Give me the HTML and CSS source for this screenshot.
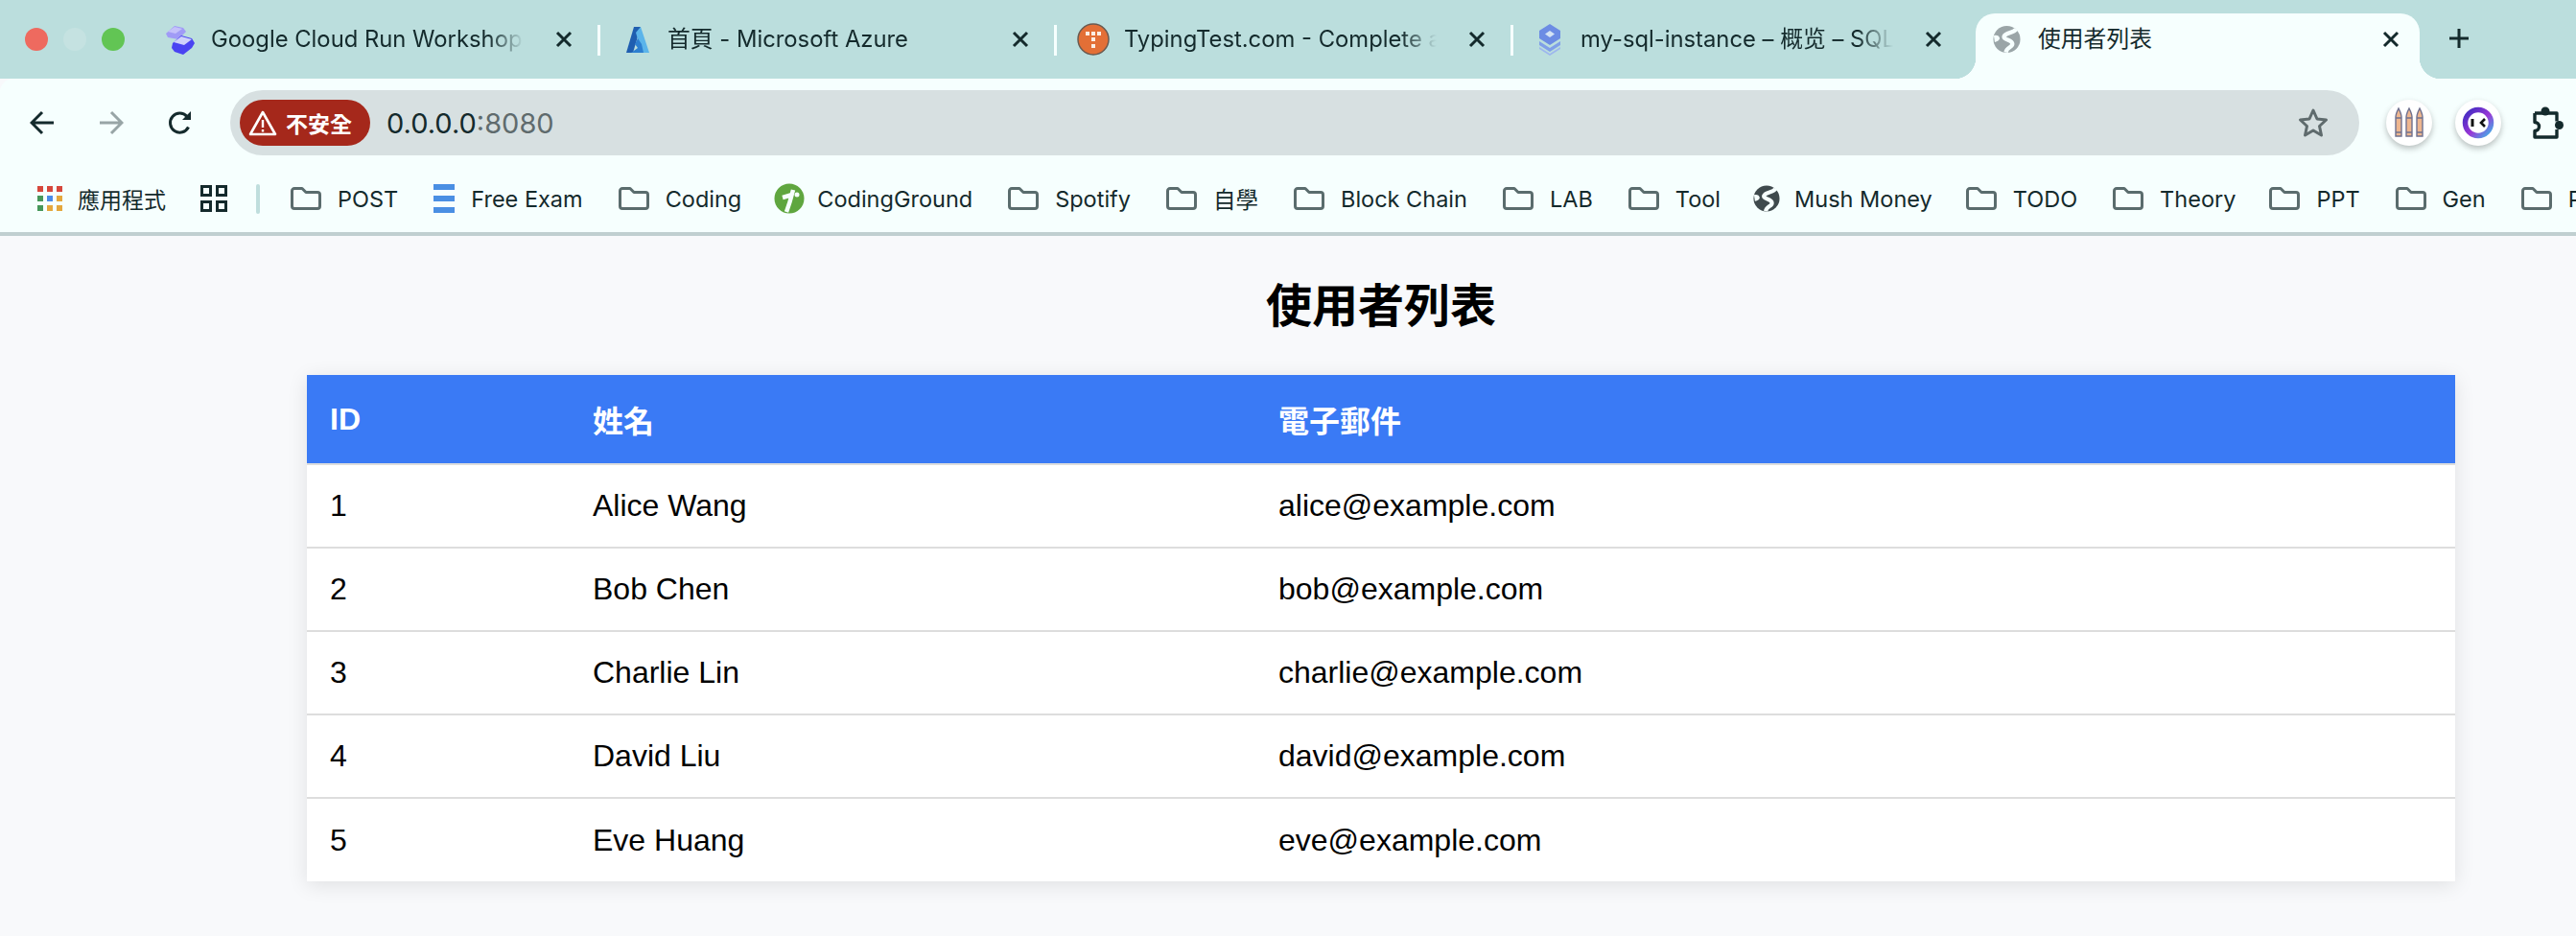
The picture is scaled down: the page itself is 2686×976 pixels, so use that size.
FILE: index.html
```html
<!DOCTYPE html>
<html lang="zh-Hant">
<head>
    <meta charset="UTF-8">
    <title>使用者列表</title>
    <link rel="stylesheet" href="styles.css">
</head>
<body>

    <svg class="defs" aria-hidden="true">
        <symbol id="folder" viewBox="0 0 32 24">
            <path d="M1.5 4a2.5 2.5 0 0 1 2.5-2.5h8l4 4h12a2.5 2.5 0 0 1 2.5 2.5v12a2.5 2.5 0 0 1-2.5 2.5H4A2.5 2.5 0 0 1 1.5 20z" fill="none" stroke="#5a6c6d" stroke-width="3" stroke-linejoin="round"/>
        </symbol>
        <symbol id="close" viewBox="0 0 20 20">
            <path d="M3 3l14 14M17 3L3 17" fill="none" stroke="#142a2c" stroke-width="3"/>
        </symbol>
        <symbol id="globe" viewBox="0 0 30 30">
            <circle cx="15" cy="15" r="14.5" fill="currentColor"/>
            <path d="M25 4c-3 5-11 3-13 8-1 4 9 3 9 8 0 4-6 3-7 9" fill="none" stroke="#f6fffe" stroke-width="4.500"/>
            <path d="M1 11c3-1 5 0 6 2s-1 4-5 5z" fill="#f6fffe"/>
        </symbol>
    </svg>

    <div class="tabstrip">
        <div class="traffic">
            <span class="light light-red"></span>
            <span class="light light-idle"></span>
            <span class="light light-green"></span>
        </div>

        <div class="tab">
            <svg class="favicon" viewBox="0 0 34 34">
                <path d="M2 11l9-8 9 2 3 4-8 8-11-2z" fill="#a09bf6"/>
                <path d="M4 9l7-5 8 2-7 5z" fill="#c4c1fa"/>
                <path d="M9 21l9-8 11 3 3 5-3 5-9 7-9-3-3-4z" fill="#4a43f2"/>
                <path d="M10 20l8-6 11 3-8 6z" fill="#cfd1fb"/>
            </svg>
            <span class="tab-title">Google Cloud Run Workshop</span>
            <svg class="tab-close"><use href="#close"/></svg>
            <span class="tab-sep"></span>
        </div>

        <div class="tab">
            <svg class="favicon" viewBox="0 0 34 34">
                <path d="M14 4h7L13 31H6z" fill="#1f5eb0"/>
                <path d="M21 4l9 27h-8L16 10z" fill="#5bb4ea"/>
                <path d="M18 16l4 6 2 9H11l7-5-3-4z" fill="#2d7fd0"/>
            </svg>
            <span class="tab-title">首頁 - Microsoft Azure</span>
            <svg class="tab-close"><use href="#close"/></svg>
            <span class="tab-sep"></span>
        </div>

        <div class="tab">
            <svg class="favicon" viewBox="0 0 34 34">
                <circle cx="17" cy="17" r="16" fill="#e36f36" stroke="#6a5a50" stroke-width="1.5"/>
                <path d="M9 9h4v4H9zM15 9h4v4h-4zM21 9h4v4h-4zM15 15h4v4h-4zM15 22h4v4h-4z" fill="#fbeee4"/>
            </svg>
            <span class="tab-title">TypingTest.com - Complete a</span>
            <svg class="tab-close"><use href="#close"/></svg>
            <span class="tab-sep"></span>
        </div>

        <div class="tab">
            <svg class="favicon" viewBox="0 0 34 34">
                <path d="M17 1l11 7v8l-11 7-11-7V8z" fill="#6c8ce4"/>
                <path d="M17 8l5 3.500-5 3.500-5-3.500z" fill="#d4e3f5"/>
                <path d="M6 19l11 7 11-7v4l-11 7-11-7z" fill="#7f9fe8"/>
                <path d="M6 25l11 7 11-7v2l-11 7-11-7z" fill="#9db6ee"/>
            </svg>
            <span class="tab-title">my-sql-instance – 概览 – SQL</span>
            <svg class="tab-close"><use href="#close"/></svg>
        </div>

        <div class="tab tab-active">
            <svg class="favicon favicon-globe"><use href="#globe"/></svg>
            <span class="tab-title">使用者列表</span>
            <svg class="tab-close"><use href="#close"/></svg>
        </div>

        <svg class="new-tab" viewBox="0 0 20 20">
            <path d="M10 0v20M0 10h20" stroke="#142a2c" stroke-width="3"/>
        </svg>
    </div>

    <div class="toolbar">
        <button class="nav-btn">
            <svg viewBox="0 0 26 26"><path d="M25 13H3M13 2L2 13l11 11" fill="none" stroke="#142a2c" stroke-width="3"/></svg>
        </button>
        <button class="nav-btn">
            <svg viewBox="0 0 26 26"><path d="M1 13h22M13 2l11 11-11 11" fill="none" stroke="#98a5a6" stroke-width="3"/></svg>
        </button>
        <button class="nav-btn">
            <svg viewBox="0 0 26 26"><path d="M21.500 17.500A10 10 0 1 1 20 6.500" fill="none" stroke="#142a2c" stroke-width="3"/><path d="M24 1v9h-9z" fill="#142a2c"/></svg>
        </button>

        <div class="omnibox">
            <div class="badge">
                <svg viewBox="0 0 30 28"><path d="M15 3L2 26h26z" fill="none" stroke="#fff" stroke-width="2.600" stroke-linejoin="round"/><path d="M15 11v8M15 21v2.500" stroke="#fff" stroke-width="2.400"/></svg>
                <span>不安全</span>
            </div>
            <span class="url">0.0.0.0<span class="url-port">:8080</span></span>
            <svg class="star" viewBox="0 0 32 32"><path d="M16 3l4 9 9.500 1-7 6.500 2 9.500-8.500-5-8.500 5 2-9.500-7-6.500 9.500-1z" fill="none" stroke="#5f6b6d" stroke-width="3" stroke-linejoin="round"/></svg>
        </div>

        <div class="ext">
            <svg viewBox="0 0 48 48">
                <g fill="#eeb68f" stroke="#6f7190" stroke-width="1.400">
                    <path d="M10 30V18c0-3 1.500-6 3-9 1.500 3 3 6 3 9v20h-6z"/>
                    <path d="M21 30V18c0-3 1.500-6 3-9 1.500 3 3 6 3 9v20h-6z"/>
                    <path d="M32 30V18c0-3 1.500-6 3-9 1.500 3 3 6 3 9v20h-6z"/>
                    <path d="M10 19h6M21 19h6M32 19h6M10 34h6M21 34h6M32 34h6" fill="none"/>
                </g>
            </svg>
        </div>
        <div class="ext ext-last">
            <svg viewBox="0 0 48 48">
                <defs>
                    <linearGradient id="ringFill" x1="0" y1="0" x2="1" y2="1">
                        <stop offset="0" stop-color="#3b2bc0"/>
                        <stop offset="0.550" stop-color="#9a37d6"/>
                        <stop offset="1" stop-color="#3fb6e8"/>
                    </linearGradient>
                </defs>
                <circle cx="24" cy="24" r="13.500" fill="#fff" stroke="url(#ringFill)" stroke-width="5.500"/>
                <path d="M18 20v8" stroke="#111" stroke-width="3"/>
                <path d="M31 20l-4 4 4 4" fill="none" stroke="#111" stroke-width="2.600"/>
            </svg>
        </div>
        <svg class="puzzle" viewBox="0 0 34 34">
            <path d="M3 7h23v8.500M26 24v8H3v-6.500a4.500 4.500 0 0 0 0-9V7" fill="none" stroke="#142a2c" stroke-width="3.400" stroke-linejoin="round"/>
            <circle cx="14" cy="5" r="4.500" fill="#142a2c"/>
            <circle cx="28.500" cy="19.500" r="4.500" fill="#142a2c"/>
        </svg>
    </div>

    <div class="bookmarks">
        <div class="bm bm-apps">
            <svg class="bm-icon-apps" viewBox="0 0 26 26">
                <path d="M0 0h6v6H0zM10 0h6v6h-6zM20 0h6v6h-6z" fill="#d6473c"/>
                <path d="M0 10h6v6H0z" fill="#46975a"/>
                <path d="M10 10h6v6h-6z" fill="#4a8be8"/>
                <path d="M20 10h6v6h-6z" fill="#e4a73d"/>
                <path d="M0 20h6v6H0z" fill="#46975a"/>
                <path d="M10 20h6v6h-6zM20 20h6v6h-6z" fill="#e4a73d"/>
            </svg>
            <span>應用程式</span>
        </div>
        <svg class="bm-grid" viewBox="0 0 28 28">
            <path d="M1.500 1.500h9v9h-9zM17.500 1.500h9v9h-9zM1.500 17.500h9v9h-9zM17.500 17.500h9v9h-9z" fill="none" stroke="#142a2c" stroke-width="3"/>
        </svg>
        <span class="bm-sep"></span>

        <div class="bm"><svg class="bm-folder"><use href="#folder"/></svg><span>POST</span></div>
        <div class="bm">
            <svg class="bm-icon-exam" viewBox="0 0 22 30">
                <path d="M0 0h22v6H0zM0 12h22v6H0zM0 24h22v6H0z" fill="#4a8fe3"/>
            </svg>
            <span>Free Exam</span>
        </div>
        <div class="bm"><svg class="bm-folder"><use href="#folder"/></svg><span>Coding</span></div>
        <div class="bm bm-tight">
            <svg class="bm-icon-round" viewBox="0 0 32 32">
                <circle cx="16" cy="16" r="15.500" fill="#5fa63f"/>
                <path d="M20 7c-2 8-4 15-7 23M9 15l10-3" fill="none" stroke="#f6fffe" stroke-width="4.500"/>
                <circle cx="24" cy="12" r="2.500" fill="#f6fffe"/>
            </svg>
            <span>CodingGround</span>
        </div>
        <div class="bm"><svg class="bm-folder"><use href="#folder"/></svg><span>Spotify</span></div>
        <div class="bm"><svg class="bm-folder"><use href="#folder"/></svg><span>自學</span></div>
        <div class="bm"><svg class="bm-folder"><use href="#folder"/></svg><span>Block Chain</span></div>
        <div class="bm"><svg class="bm-folder"><use href="#folder"/></svg><span>LAB</span></div>
        <div class="bm"><svg class="bm-folder"><use href="#folder"/></svg><span>Tool</span></div>
        <div class="bm bm-mush"><svg class="bm-icon-mush"><use href="#globe"/></svg><span>Mush Money</span></div>
        <div class="bm"><svg class="bm-folder"><use href="#folder"/></svg><span>TODO</span></div>
        <div class="bm bm-theory"><svg class="bm-folder"><use href="#folder"/></svg><span>Theory</span></div>
        <div class="bm"><svg class="bm-folder"><use href="#folder"/></svg><span>PPT</span></div>
        <div class="bm"><svg class="bm-folder"><use href="#folder"/></svg><span>Gen</span></div>
        <div class="bm"><svg class="bm-folder"><use href="#folder"/></svg><span>P</span></div>
    </div>

    <main class="page">
        <h1 class="page-title">使用者列表</h1>
        <table class="user-table">
            <colgroup>
                <col class="col-id">
                <col class="col-name">
                <col>
            </colgroup>
            <thead>
                <tr><th>ID</th><th>姓名</th><th>電子郵件</th></tr>
            </thead>
            <tbody>
                <tr><td>1</td><td>Alice Wang</td><td>alice@example.com</td></tr>
                <tr><td>2</td><td>Bob Chen</td><td>bob@example.com</td></tr>
                <tr><td>3</td><td>Charlie Lin</td><td>charlie@example.com</td></tr>
                <tr><td>4</td><td>David Liu</td><td>david@example.com</td></tr>
                <tr><td>5</td><td>Eve Huang</td><td>eve@example.com</td></tr>
            </tbody>
        </table>
    </main>

</body>
</html>
```

FILE: styles.css
```css
body {
    margin: 0;
    height: 976px;
    overflow: hidden;
    background-color: #f8f9fb;
    font-family: 'Inter', 'Noto Sans CJK TC', sans-serif;
    color: #142a2c;
}
.defs {
    display: none;
}

/* tab strip */
.tabstrip {
    display: flex;
    height: 82px;
    background-color: #bbdedd;
}
.traffic {
    display: flex;
    flex: none;
    width: 150px;
    height: 82px;
    align-items: center;
    gap: 16px;
    padding-left: 26px;
    box-sizing: border-box;
}
.light {
    width: 24px;
    height: 24px;
    border-radius: 50%;
}
.light-red {
    background-color: #ee6a5f;
}
.light-idle {
    background-color: #c5e2e1;
}
.light-green {
    background-color: #62c554;
}
.tab {
    position: relative;
    display: flex;
    flex: none;
    align-items: center;
    width: 476px;
    height: 68px;
    margin-top: 14px;
    padding-bottom: 14px;
    box-sizing: border-box;
    font-size: 23.800px;
}
.favicon {
    flex: none;
    width: 34px;
    height: 34px;
    margin-left: 21px;
}
.tab-title {
    flex: none;
    width: 336px;
    margin-left: 15px;
    overflow: hidden;
    line-height: 32px;
    white-space: nowrap;
    -webkit-mask-image: linear-gradient(to right, #000 86%, transparent 97%);
    mask-image: linear-gradient(to right, #000 86%, transparent 97%);
}
.tab-close {
    flex: none;
    width: 20px;
    height: 20px;
    margin-left: 22px;
}
.tab-sep {
    position: absolute;
    top: 12px;
    right: 0;
    width: 3px;
    height: 32px;
    background-color: #f6fffe;
}
.tab-active {
    width: 463px;
    margin-left: 6px;
    border-radius: 20px 20px 0 0;
    background-color: #f6fffe;
}
.tab-active::before,
.tab-active::after {
    content: "";
    position: absolute;
    bottom: 0;
    width: 22px;
    height: 22px;
}
.tab-active::before {
    left: -22px;
    background: radial-gradient(circle at 0 0, transparent 22px, #f6fffe 22.500px);
}
.tab-active::after {
    right: -22px;
    background: radial-gradient(circle at 100% 0, transparent 22px, #f6fffe 22.500px);
}
.favicon-globe {
    width: 29px;
    height: 30px;
    margin-left: 18px;
    color: #9aa5a7;
}
.tab-active .tab-title {
    margin-left: 18px;
    -webkit-mask-image: none;
    mask-image: none;
}
.new-tab {
    flex: none;
    width: 20px;
    height: 20px;
    margin: 30px 0 0 31px;
}

/* toolbar */
.toolbar {
    display: flex;
    align-items: center;
    height: 90px;
    padding: 12px 12px 10px 8px;
    box-sizing: border-box;
    border-radius: 14px 0 0 0;
    background-color: #f6fffe;
}
.nav-btn {
    display: flex;
    flex: none;
    align-items: center;
    justify-content: center;
    width: 72px;
    height: 68px;
    padding: 0;
    border: none;
    background: none;
}
.nav-btn svg {
    width: 26px;
    height: 26px;
}
.omnibox {
    display: flex;
    flex: 1;
    align-items: center;
    height: 68px;
    margin-left: 16px;
    padding: 0 32px 0 10px;
    border-radius: 34px;
    background-color: #d7e0e1;
}
.badge {
    display: flex;
    align-items: center;
    gap: 9px;
    width: 136px;
    height: 48px;
    padding-left: 9px;
    box-sizing: border-box;
    border-radius: 24px;
    background-color: #a5281b;
    color: #fff;
    font-size: 23px;
    font-weight: 700;
}
.badge svg {
    width: 30px;
    height: 28px;
}
.url {
    margin-left: 17px;
    font-size: 29px;
}
.url-port {
    color: #5f6b6d;
}
.star {
    width: 32px;
    height: 32px;
    margin-left: auto;
}
.ext {
    flex: none;
    width: 48px;
    height: 48px;
    margin-left: 28px;
    border-radius: 50%;
    background-color: #fff;
    box-shadow: 0 3px 6px rgba(0, 0, 0, 0.25);
}
.ext svg {
    display: block;
    width: 48px;
    height: 48px;
}
.ext-last {
    margin-left: 24px;
}
.puzzle {
    flex: none;
    width: 34px;
    height: 34px;
    margin-left: 32px;
}

/* bookmarks */
.bookmarks {
    display: flex;
    align-items: center;
    gap: 37px;
    height: 74px;
    padding-left: 39px;
    box-sizing: border-box;
    overflow: hidden;
    border-bottom: 4px solid #c0cfd0;
    background-color: #f6fffe;
    font-size: 23.500px;
    white-space: nowrap;
}
.bm {
    display: flex;
    flex: none;
    align-items: center;
    gap: 17px;
}
.bm-tight {
    gap: 13px;
    margin-left: -3px;
}
.bm-mush {
    gap: 15px;
    margin: 0 -2px 0 -3px;
}
.bm-theory {
    margin-right: -2px;
}
.bm-apps {
    gap: 16px;
    margin-right: -1px;
    font-size: 23px;
}
.bm-icon-apps {
    width: 26px;
    height: 26px;
}
.bm-grid {
    flex: none;
    width: 28px;
    height: 28px;
    margin-right: -7px;
}
.bm-sep {
    flex: none;
    width: 4px;
    height: 31px;
    margin-right: -5px;
    border-radius: 2px;
    background-color: #bfdedd;
}
.bm-folder {
    flex: none;
    width: 32px;
    height: 24px;
}
.bm-icon-exam {
    width: 22px;
    height: 30px;
}
.bm-icon-round {
    width: 32px;
    height: 32px;
}
.bm-icon-mush {
    width: 28px;
    height: 28px;
    color: #3f4a4d;
}

/* page */
.page {
    width: 2240px;
    margin-left: 320px;
    color: #000;
    font-family: 'Liberation Sans', 'Noto Sans CJK TC', sans-serif;
}
.page-title {
    margin: 0;
    padding: 44px 0 41px;
    font-size: 48px;
    line-height: 60px;
    text-align: center;
}
.user-table {
    width: 100%;
    border-collapse: collapse;
    table-layout: fixed;
    background-color: #fff;
    box-shadow: 0 4px 20px rgba(0, 0, 0, 0.1);
    font-size: 32px;
}
.col-id {
    width: 274px;
}
.col-name {
    width: 715px;
}
.user-table th {
    height: 93px;
    padding: 0 24px;
    box-sizing: border-box;
    background-color: #3a7af5;
    color: #fff;
    font-weight: 700;
    text-align: left;
}
.user-table td {
    height: 87px;
    padding: 0 24px;
    box-sizing: border-box;
    border-bottom: 2px solid #dddddd;
}
.user-table tbody tr:first-child td {
    border-top: 2px solid #dddddd;
}
.user-table tbody tr:last-child td {
    border-bottom: none;
}
```
